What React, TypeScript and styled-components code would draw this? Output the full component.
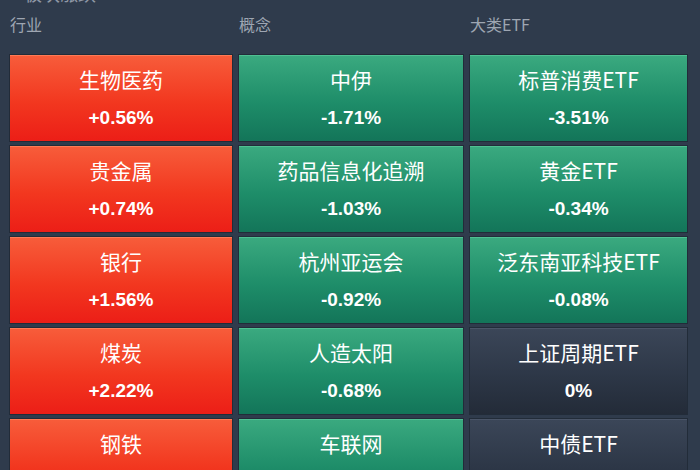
import styled, { createGlobalStyle } from 'styled-components';

type Trend = 'up' | 'down' | 'flat';

interface Item {
  name: string;
  change: string;
  trend: Trend;
}

const industry: Item[] = [
  { name: '生物医药', change: '+0.56%', trend: 'up' },
  { name: '贵金属', change: '+0.74%', trend: 'up' },
  { name: '银行', change: '+1.56%', trend: 'up' },
  { name: '煤炭', change: '+2.22%', trend: 'up' },
  { name: '钢铁', change: '+0.31%', trend: 'up' },
];

const concept: Item[] = [
  { name: '中伊', change: '-1.71%', trend: 'down' },
  { name: '药品信息化追溯', change: '-1.03%', trend: 'down' },
  { name: '杭州亚运会', change: '-0.92%', trend: 'down' },
  { name: '人造太阳', change: '-0.68%', trend: 'down' },
  { name: '车联网', change: '-0.52%', trend: 'down' },
];

const etf: Item[] = [
  { name: '标普消费ETF', change: '-3.51%', trend: 'down' },
  { name: '黄金ETF', change: '-0.34%', trend: 'down' },
  { name: '泛东南亚科技ETF', change: '-0.08%', trend: 'down' },
  { name: '上证周期ETF', change: '0%', trend: 'flat' },
  { name: '中债ETF', change: '0%', trend: 'flat' },
];

const columns = [
  { title: '行业', items: industry },
  { title: '概念', items: concept },
  { title: '大类ETF', items: etf },
];

export default function App(): JSX.Element {
  return (
    <>
      <GlobalStyle />
      <Page>
        <TitleStrip>
          <TitleText>板块涨跌</TitleText>
        </TitleStrip>
        <Board>
          {columns.map((col) => (
            <Column key={col.title}>
              <Label>{col.title}</Label>
              {col.items.map((item) => (
                <Cell key={item.name} trend={item.trend}>
                  <Name>{item.name}</Name>
                  <Change>{item.change}</Change>
                </Cell>
              ))}
            </Column>
          ))}
        </Board>
      </Page>
    </>
  );
}

const GlobalStyle = createGlobalStyle`
  html, body {
    margin: 0;
    padding: 0;
    background: #2f3b4c;
    overflow: hidden;
  }
  body {
    font-family: "Liberation Sans", "Noto Sans CJK SC", sans-serif;
  }
`;

const Page = styled.div`
  width: 700px;
  height: 470px;
  overflow: hidden;
  background: #2f3b4c;
  padding: 0 13px 0 10px;
  box-sizing: border-box;
`;

// only the lower edge of the heading is visible at the top of the shot
const TitleStrip = styled.div`
  height: 5px;
  overflow: hidden;
  padding-left: 14px;
`;

const TitleText = styled.div`
  margin-top: -17px;
  font-family: "Noto Sans CJK SC", sans-serif;
  font-size: 18px;
  line-height: 20px;
  color: #8f98a6;
`;

const Board = styled.div`
  display: grid;
  grid-template-columns: 222px 224px 217px;
  column-gap: 7px;
`;

const Column = styled.div`
  display: flex;
  flex-direction: column;
  gap: 5px;
`;

const Label = styled.div`
  height: 45px;
  padding-top: 6px;
  box-sizing: border-box;
  font-family: "Noto Sans CJK SC", sans-serif;
  font-size: 16px;
  line-height: 26px;
  color: #9ea6b2;
`;

const backgrounds: Record<Trend, string> = {
  up: 'linear-gradient(180deg, #f75c3a 0%, #f2371f 55%, #ec1e17 100%)',
  down: 'linear-gradient(180deg, #3aa97f 0%, #1e8d69 55%, #137559 100%)',
  flat: 'linear-gradient(180deg, #3b4658 0%, #2d3747 55%, #232b38 100%)',
};

const edges: Record<Trend, string> = {
  up: '#ff7a55',
  down: '#4fc092',
  flat: '#4a5568',
};

const Cell = styled.div<{ trend: Trend }>`
  height: 86px;
  flex-shrink: 0;
  box-sizing: border-box;
  background: ${({ trend }) => backgrounds[trend]};
  border-top: 1px solid ${({ trend }) => edges[trend]};
  box-shadow: 0 0 0 1px rgba(20, 26, 36, 0.45);
  display: flex;
  flex-direction: column;
  align-items: center;
  color: #fff;
`;

const Name = styled.div`
  margin-top: 8px;
  font-family: "Noto Sans CJK SC", sans-serif;
  font-size: 21px;
  line-height: 30px;
`;

const Change = styled.div`
  margin-top: 12px;
  font-family: "Liberation Sans", "Noto Sans CJK SC", sans-serif;
  font-size: 19px;
  font-weight: bold;
  line-height: 24px;
`;
